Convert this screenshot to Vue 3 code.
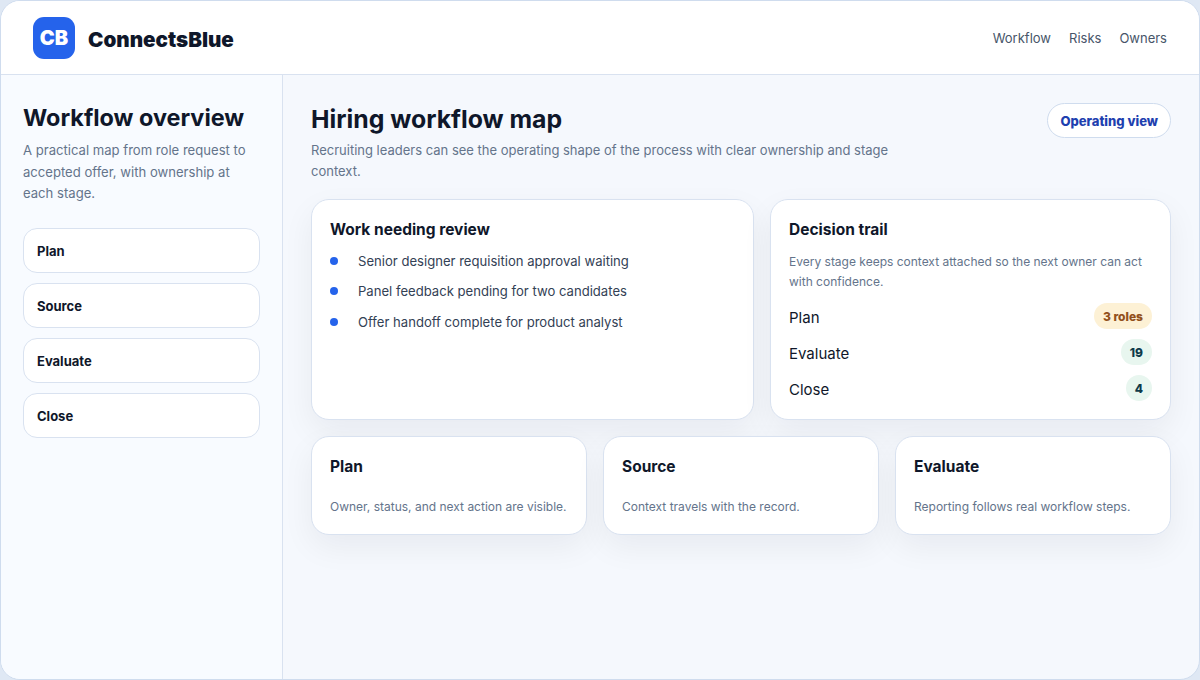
<template>
  <div class="shell">
    <header class="topbar">
      <div class="brand">
        <span class="logo">CB</span>
        <span class="brand-name">ConnectsBlue</span>
      </div>
      <nav class="topnav">
        <a v-for="link in links" :key="link">{{ link }}</a>
      </nav>
    </header>

    <div class="body">
      <aside class="sidebar">
        <h2>Workflow overview</h2>
        <p class="intro">A practical map from role request to accepted offer, with ownership at each stage.</p>
        <div class="stages">
          <button v-for="stage in stages" :key="stage" class="stage">{{ stage }}</button>
        </div>
      </aside>

      <main class="main">
        <div class="page-head">
          <div>
            <h1>Hiring workflow map</h1>
            <p>Recruiting leaders can see the operating shape of the process with clear ownership and stage context.</p>
          </div>
          <span class="view-pill">Operating view</span>
        </div>

        <div class="top-grid">
          <section class="card">
            <h3>Work needing review</h3>
            <ul class="review">
              <li v-for="item in reviewItems" :key="item">{{ item }}</li>
            </ul>
          </section>
          <section class="card">
            <h3>Decision trail</h3>
            <p class="note">Every stage keeps context attached so the next owner can act with confidence.</p>
            <div class="trail">
              <div v-for="row in trail" :key="row.name" class="trail-row">
                <span class="trail-name">{{ row.name }}</span>
                <span class="count" :class="{ warm: row.warm }">{{ row.value }}</span>
              </div>
            </div>
          </section>
        </div>

        <div class="bottom-grid">
          <section v-for="card in summary" :key="card.title" class="card small">
            <h3>{{ card.title }}</h3>
            <p class="note">{{ card.text }}</p>
          </section>
        </div>
      </main>
    </div>
  </div>
</template>

<script setup>
const links = ['Workflow', 'Risks', 'Owners'];
const stages = ['Plan', 'Source', 'Evaluate', 'Close'];
const reviewItems = [
  'Senior designer requisition approval waiting',
  'Panel feedback pending for two candidates',
  'Offer handoff complete for product analyst'
];
const trail = [
  { name: 'Plan', value: '3 roles', warm: true },
  { name: 'Evaluate', value: '19' },
  { name: 'Close', value: '4' }
];
const summary = [
  { title: 'Plan', text: 'Owner, status, and next action are visible.' },
  { title: 'Source', text: 'Context travels with the record.' },
  { title: 'Evaluate', text: 'Reporting follows real workflow steps.' }
];
</script>

<style>
body {
  background: #dfe8f4;
}
</style>

<style scoped>
.shell {
  box-sizing: border-box;
  width: 1200px;
  height: 680px;
  display: flex;
  flex-direction: column;
  overflow: hidden;
  border: 1px solid #cfdcee;
  border-radius: 20px;
  background: #f5f8fd;
  color: #111827;
  font-family: Inter, sans-serif;
}

.topbar {
  box-sizing: border-box;
  height: 74px;
  flex: none;
  display: flex;
  align-items: center;
  justify-content: space-between;
  padding: 0 32px;
  background: #fff;
  border-bottom: 1px solid #d9e2f0;
}

.brand {
  display: flex;
  align-items: center;
  gap: 13px;
}

.logo {
  width: 42px;
  height: 42px;
  display: flex;
  align-items: center;
  justify-content: center;
  padding-top: 1px;
  box-sizing: border-box;
  border-radius: 11px;
  background: #2563eb;
  color: #fff;
  font-size: 20px;
  font-weight: 900;
}

.brand-name {
  padding-top: 3px;
  font-size: 20.6px;
  font-weight: 900;
  color: #0f172a;
}

.topnav {
  display: flex;
  gap: 18px;
  font-size: 13px;
  color: #475569;
}

.body {
  flex: 1;
  display: flex;
  min-height: 0;
}

.sidebar {
  box-sizing: border-box;
  width: 282px;
  flex: none;
  padding: 28px 22px;
  background: #f8fbff;
  border-right: 1px solid #d9e2f0;
}

.sidebar h2 {
  margin: 0;
  font-size: 23.4px;
  line-height: 30px;
  font-weight: 700;
  color: #0f172a;
}

.intro {
  margin: 7px 0 0;
  font-size: 13.1px;
  line-height: 21.5px;
  color: #64748b;
}

.stages {
  display: flex;
  flex-direction: column;
  gap: 10px;
  margin-top: 23px;
}

.stage {
  box-sizing: border-box;
  height: 45px;
  padding: 2px 13px 0;
  text-align: left;
  border: 1px solid #d9e2f0;
  border-radius: 14px;
  background: #fff;
  color: #0f172a;
  font-family: inherit;
  font-size: 13px;
  font-weight: 700;
}

.main {
  flex: 1;
  min-width: 0;
  padding: 28px 28px 0;
}

.page-head {
  display: flex;
  justify-content: space-between;
  align-items: flex-start;
  margin-bottom: 17px;
}

.page-head h1 {
  margin: 0;
  font-size: 24.8px;
  line-height: 32px;
  font-weight: 700;
  color: #0f172a;
}

.page-head p {
  max-width: 600px;
  margin: 5px 0 0;
  font-size: 13px;
  line-height: 21px;
  color: #64748b;
}

.view-pill {
  box-sizing: border-box;
  height: 35px;
  display: flex;
  align-items: center;
  padding: 0 12px;
  border: 1px solid #cfdcee;
  border-radius: 999px;
  background: #fff;
  color: #1e40af;
  font-size: 13px;
  font-weight: 800;
}

.top-grid {
  display: grid;
  grid-template-columns: 443px 401px;
  gap: 16px;
  height: 221px;
}

.bottom-grid {
  display: grid;
  grid-template-columns: repeat(3, 1fr);
  gap: 16px;
  margin-top: 16px;
}

.card {
  box-sizing: border-box;
  padding: 18px;
  border: 1px solid #d9e2f0;
  border-radius: 18px;
  background: #fff;
  box-shadow: 0 12px 32px rgba(15, 23, 42, 0.06);
}

.card h3 {
  margin: 0;
  font-size: 15.5px;
  line-height: 24px;
  font-weight: 700;
  color: #0f172a;
}

.review {
  list-style: none;
  margin: 8.7px 0 0;
  padding: 0;
}

.review li {
  position: relative;
  padding-left: 28px;
  margin-bottom: 10px;
  font-size: 13.1px;
  line-height: 20.5px;
  color: #334155;
}

.review li::before {
  content: "";
  position: absolute;
  left: 0;
  top: 6px;
  width: 8px;
  height: 8px;
  border-radius: 50%;
  background: #2563eb;
}

.note {
  margin: 10px 0 0;
  font-size: 12px;
  line-height: 20px;
  color: #64748b;
}

.trail {
  display: flex;
  flex-direction: column;
  gap: 10px;
  margin-top: 11px;
}

.trail-row {
  display: flex;
  justify-content: space-between;
  align-items: center;
  height: 26px;
  font-size: 15px;
  color: #0f172a;
}

.trail-name {
  padding-top: 2px;
}

.count {
  box-sizing: border-box;
  height: 26px;
  display: flex;
  align-items: center;
  padding: 0 9px;
  border-radius: 999px;
  background: #e8f6ef;
  color: #0f3a4a;
  font-size: 12px;
  font-weight: 800;
}

.count.warm {
  background: #fdf1d5;
  color: #92501c;
}

.small {
  height: 99px;
}

.small .note {
  margin-top: 18px;
}
</style>
